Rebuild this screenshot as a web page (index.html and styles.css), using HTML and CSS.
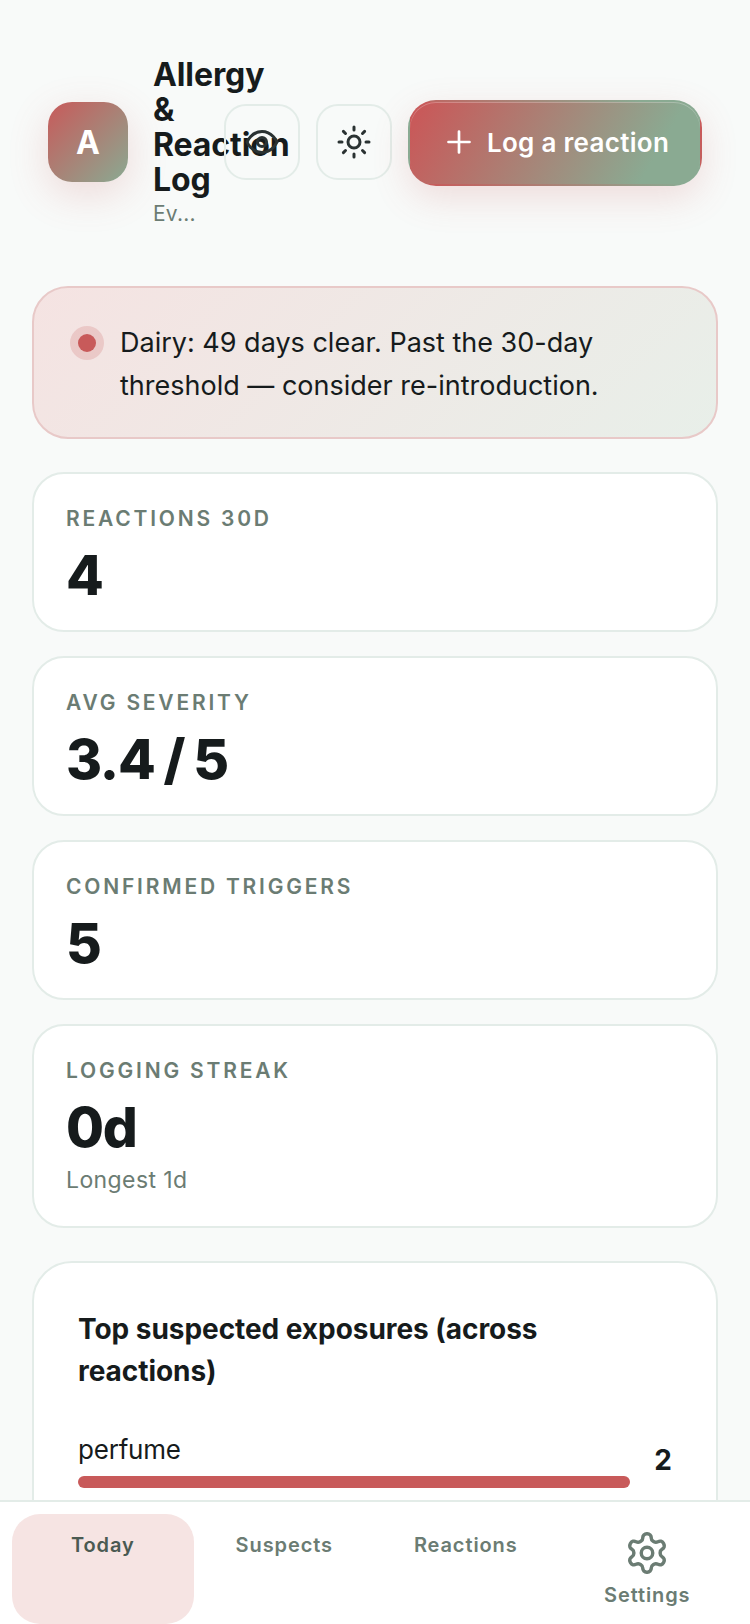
FILE: index.html
```html
<!DOCTYPE html>
<html lang="en">
<head>
<meta charset="utf-8">
<title>Allergy &amp; Reaction Log</title>
<link rel="stylesheet" href="styles.css">
</head>
<body>
<div class="app">
  <header class="header">
    <div class="avatar">A</div>
    <div class="brand">
      <h1 class="title">Allergy &amp; Reaction Log</h1>
      <div class="subtitle">Ev...</div>
    </div>
    <button class="icon-btn" aria-label="Toggle view">
      <svg class="icon" viewBox="0 0 24 24"><path d="M2 12s3-7 10-7 10 7 10 7-3 7-10 7-10-7-10-7Z"/><circle cx="12" cy="12" r="3"/></svg>
    </button>
    <button class="icon-btn" aria-label="Theme">
      <svg class="icon" viewBox="0 0 24 24"><circle cx="12" cy="12" r="4"/><path d="M12 2v2M12 20v2M4.93 4.93l1.41 1.41M17.66 17.66l1.41 1.41M2 12h2M20 12h2M6.34 17.66l-1.41 1.41M19.07 4.93l-1.41 1.41"/></svg>
    </button>
    <button class="log-btn">
      <svg class="plus" viewBox="0 0 24 24"><path d="M5 12h14M12 5v14"/></svg>
      <span>Log a reaction</span>
    </button>
  </header>

  <main class="content">
    <section class="alert">
      <span class="dot"></span>
      <p class="alert-text">Dairy: 49 days clear. Past the 30-day threshold — consider re-introduction.</p>
    </section>

    <section class="stat"><div class="stat-label">REACTIONS 30D</div><div class="stat-value">4</div></section>
    <section class="stat"><div class="stat-label">AVG SEVERITY</div><div class="stat-value">3.4 / 5</div></section>
    <section class="stat"><div class="stat-label">CONFIRMED TRIGGERS</div><div class="stat-value">5</div></section>
    <section class="stat"><div class="stat-label">LOGGING STREAK</div><div class="stat-value">0d</div><div class="stat-note">Longest 1d</div></section>

    <section class="panel">
      <h2 class="panel-title">Top suspected exposures (across reactions)</h2>
      <div class="bar-row">
        <div class="bar-main">
          <div class="bar-name">perfume</div>
          <div class="bar-track"></div>
        </div>
        <div class="bar-count">2</div>
      </div>
    </section>
  </main>

  <nav class="tabs">
    <div class="tab active"><span>Today</span></div>
    <div class="tab"><span>Suspects</span></div>
    <div class="tab"><span>Reactions</span></div>
    <div class="tab">
      <svg class="gear" viewBox="0 0 24 24"><path d="M12.22 2h-.44a2 2 0 0 0-2 2v.18a2 2 0 0 1-1 1.73l-.43.25a2 2 0 0 1-2 0l-.15-.08a2 2 0 0 0-2.73.73l-.22.38a2 2 0 0 0 .73 2.73l.15.1a2 2 0 0 1 1 1.72v.51a2 2 0 0 1-1 1.74l-.15.09a2 2 0 0 0-.73 2.73l.22.38a2 2 0 0 0 2.73.73l.15-.08a2 2 0 0 1 2 0l.43.25a2 2 0 0 1 1 1.73V20a2 2 0 0 0 2 2h.44a2 2 0 0 0 2-2v-.18a2 2 0 0 1 1-1.73l.43-.25a2 2 0 0 1 2 0l.15.08a2 2 0 0 0 2.73-.73l.22-.39a2 2 0 0 0-.73-2.73l-.15-.08a2 2 0 0 1-1-1.74v-.5a2 2 0 0 1 1-1.74l.15-.09a2 2 0 0 0 .73-2.73l-.22-.38a2 2 0 0 0-2.73-.73l-.15.08a2 2 0 0 1-2 0l-.43-.25a2 2 0 0 1-1-1.73V4a2 2 0 0 0-2-2z"/><circle cx="12" cy="12" r="3"/></svg>
      <span>Settings</span>
    </div>
  </nav>
</div>
</body>
</html>
```
FILE: styles.css
```css
* { box-sizing: border-box; }
html, body { margin: 0; padding: 0; height: 100%; }
body {
  background: #f8faf9;
  color: #161b1c;
  font-family: Inter, "Liberation Sans", sans-serif;
  overflow: hidden;
}
.app { position: relative; width: 750px; height: 1624px; overflow: hidden; }

.header {
  display: flex;
  align-items: center;
  gap: 16px;
  height: 284px;
  margin-bottom: 2px;
  padding: 0 48px;
}
.avatar {
  flex: 0 0 80px;
  height: 80px;
  margin-right: 9px;
  border-radius: 24px;
  background: linear-gradient(135deg, #c85a5a, #8aaa92);
  box-shadow: 0 12px 40px rgba(200, 90, 90, .2);
  color: #fff;
  font-size: 32px;
  font-weight: 700;
  display: flex;
  align-items: center;
  justify-content: center;
}
.brand { flex: 0 0 55px; width: 55px; min-width: 0; }
.title {
  margin: 0;
  font-size: 32px;
  font-weight: 700;
  line-height: 35px;
  letter-spacing: -.1px;
}
.subtitle {
  margin-top: 3px;
  font-size: 21px;
  line-height: 28px;
  letter-spacing: .2px;
  color: #6b7c73;
  white-space: nowrap;
}
.icon-btn {
  flex: 0 0 76px;
  height: 76px;
  padding: 0;
  border: 2px solid #e3ece8;
  border-radius: 22px;
  background: transparent;
  display: flex;
  align-items: center;
  justify-content: center;
}
.icon {
  width: 36px;
  height: 36px;
  fill: none;
  stroke: #2a3232;
  stroke-width: 2;
  stroke-linecap: round;
  stroke-linejoin: round;
}
.log-btn {
  flex: 0 0 294px;
  height: 86px;
  margin-top: 2px;
  padding: 0 0 2px;
  border: 2px solid transparent;
  border-radius: 28px;
  background: linear-gradient(120deg, #c85a5a 5%, #8aaa92 82%);
  box-shadow: 0 12px 36px rgba(200, 90, 90, .18), inset 0 1px 0 rgba(255, 255, 255, .25);
  color: #fff;
  font: 600 26px Inter, sans-serif;
  letter-spacing: .3px;
  display: flex;
  align-items: center;
  justify-content: center;
  gap: 10px;
}
.plus {
  width: 36px;
  height: 36px;
  fill: none;
  stroke: #fff;
  stroke-width: 1.8;
  stroke-linecap: round;
}

.content {
  display: flex;
  flex-direction: column;
  gap: 24px;
  padding: 0 32px;
}
.alert {
  display: flex;
  align-items: flex-start;
  gap: 24px;
  height: 153px;
  margin-bottom: 9px;
  padding: 33px 36px 32px 44px;
  border: 2px solid #e8c9c8;
  border-radius: 36px;
  background: linear-gradient(135deg, #f5e3e2, #e8efe9);
}
.dot {
  flex: 0 0 18px;
  width: 18px;
  height: 18px;
  margin-top: 13px;
  border-radius: 50%;
  background: #c85a5a;
  box-shadow: 0 0 0 8px rgba(200, 90, 90, .2);
}
.alert-text {
  margin: 0;
  font-size: 27px;
  line-height: 43px;
  color: #161b1c;
}
.stat {
  padding: 31px 32px 21px;
  border: 2px solid #e3ece8;
  border-radius: 32px;
  background: #fff;
}
.stat-label {
  font-size: 21px;
  font-weight: 600;
  line-height: 28px;
  letter-spacing: 2.8px;
  color: #6b7c73;
}
.stat-value {
  margin-top: 8px;
  font-size: 55px;
  font-weight: 800;
  line-height: 68px;
  letter-spacing: -1.2px;
  word-spacing: -2px;
  color: #161b1c;
}
.stat-note {
  margin: 3px 0 9px;
  font-size: 23px;
  line-height: 32px;
  letter-spacing: .4px;
  color: #6b7c73;
}
.panel {
  margin-top: 9px;
  padding: 45px 44px 0;
  height: 500px;
  border: 2px solid #e3ece8;
  border-radius: 40px;
  background: #fff;
}
.panel-title {
  margin: 0 0 40px;
  font-size: 28px;
  font-weight: 700;
  line-height: 42px;
  letter-spacing: -.05px;
}
.bar-row { display: flex; align-items: center; gap: 24px; }
.bar-main { flex: 1; min-width: 0; }
.bar-name { font-size: 26px; line-height: 36px; margin-bottom: 8px; letter-spacing: -.2px; }
.bar-track { height: 12px; border-radius: 6px; background: #c85a5a; }
.bar-count { flex: 0 0 auto; font-size: 28px; font-weight: 700; }

.tabs {
  position: absolute;
  left: 0;
  right: 0;
  bottom: 0;
  height: 124px;
  padding: 12px 12px 0;
  display: grid;
  grid-template-columns: repeat(4, 1fr);
  border-top: 2px solid #e3ece8;
  background: #fff;
}
.tab {
  display: flex;
  flex-direction: column;
  align-items: center;
  gap: 5px;
  height: 110px;
  padding-top: 17px;
  border-radius: 28px;
  font-size: 20px;
  font-weight: 600;
  line-height: 28px;
  letter-spacing: .9px;
  color: #6b7c73;
}
.tab.active { background: #f6e4e3; color: #4a5a52; }
.gear {
  width: 46px;
  height: 46px;
  margin-top: -1px;
  fill: none;
  stroke: #6b7c73;
  stroke-width: 1.8;
  stroke-linecap: round;
  stroke-linejoin: round;
}
```
